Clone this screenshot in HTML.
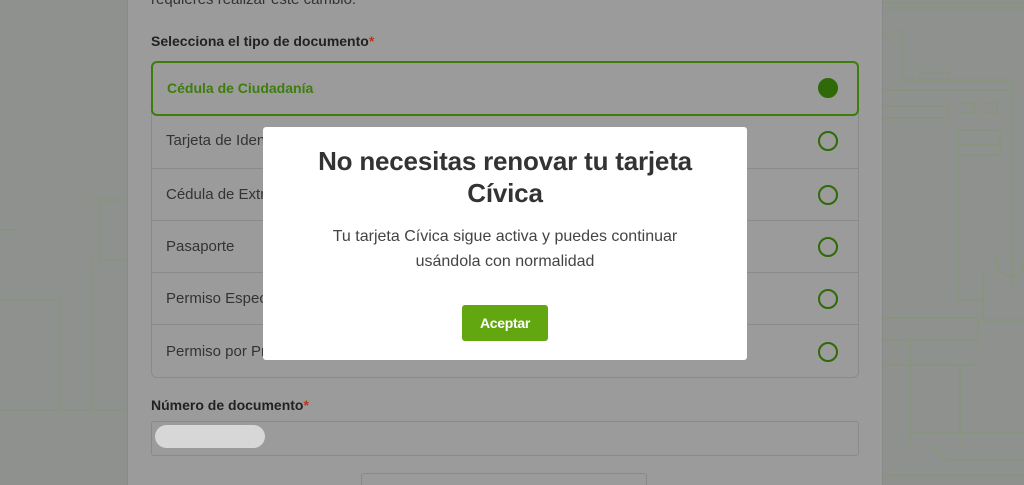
<!DOCTYPE html>
<html><head><meta charset="utf-8"><style>
*{margin:0;padding:0;box-sizing:border-box}
html{width:1024px;height:485px;overflow:hidden}
body{width:1024px;height:485px;overflow:hidden;background:#8f918e;font-family:"Liberation Sans",sans-serif;position:relative}
.card{position:absolute;left:127px;top:0;width:756px;height:485px;background:#9b9b9b;border-left:1px solid #8a8a8a;border-right:1px solid #8a8a8a}
.t{position:absolute;color:#2e2e2e}
.list{position:absolute;left:151px;top:61px;width:708px;height:317px;border:1px solid #8a8a8a;border-radius:6px;overflow:visible}
.row{position:absolute;left:0;width:706px;border-top:1px solid #8a8a8a;font-size:15px;color:#333;padding-left:14px}
.rad{position:absolute;right:20px;width:20px;height:20px;border:2px solid #2f6a08;border-radius:50%}
.modal{position:absolute;left:263px;top:127px;width:484px;height:233px;background:#fff;border-radius:3px;text-align:center}
.btn{position:absolute;left:199px;top:178px;width:86px;height:36px;background:#62a70f;border-radius:3px;color:#fff;font-weight:bold;font-size:14px;line-height:36px;letter-spacing:-0.3px}
</style></head><body>
<svg style="position:absolute;left:0;top:0" width="1024" height="485" fill="none" stroke="#86967a" stroke-width="1.5">
<path d="M883 3H1024M883 8H1024M883 40L902 30V80H1012V155M920 80V73H948V80M883 90H1012M883 106H948V118H883M960 103H974V113H960M984 103H997V113H984M958 130V155H1000V130ZM958 145H1000M958 155V300H983M1012 155V290M983 270V320H1024M1012 178V210M998 255A14 14 0 1 0 1024 260M1012 290V265M883 340H978V318H883M883 365H978M910 340V443M910 433H1024M960 365V443M930 445L945 460H1024M883 475H1024"/>
<path d="M0 230H20M0 300H20M90 200H127M100 200V260H127M92 260V410H127M0 410H127M0 300H60V410"/>
</svg>
<div class="card"></div>
<div class="t" style="left:151px;top:-9px;font-size:15px;color:#333">requieres realizar este cambio.</div>
<div class="t" style="left:151px;top:33px;font-size:14px;font-weight:bold;color:#222">Selecciona el tipo de documento<span style="color:#b5381c">*</span></div>
<div class="list">
<div class="row" style="top:-1px;left:-1px;width:708px;height:55px;border:2px solid #3d7d0b;border-radius:6px;color:#3d7d0b;font-weight:bold;font-size:14px;line-height:51px">Cédula de Ciudadanía<div class="rad" style="top:15px;background:#2f6a08;right:19px"></div></div>
<div class="row" style="top:53px;height:53px;line-height:52px;border-top:none">Tarjeta de Iden<div class="rad" style="top:16px"></div></div>
<div class="row" style="top:106px;height:52px;line-height:52px">Cédula de Extr<div class="rad" style="top:16px"></div></div>
<div class="row" style="top:158px;height:52px;line-height:52px">Pasaporte<div class="rad" style="top:16px"></div></div>
<div class="row" style="top:210px;height:52px;line-height:52px">Permiso Especi<div class="rad" style="top:16px"></div></div>
<div class="row" style="top:262px;height:53px;line-height:54px">Permiso por Pr<div class="rad" style="top:17px"></div></div>
</div>
<div class="t" style="left:151px;top:397px;font-size:14px;font-weight:bold;color:#222">Número de documento<span style="color:#b5381c">*</span></div>
<div style="position:absolute;left:151px;top:421px;width:708px;height:35px;border:1px solid #8a8a8a;border-radius:3px"></div>
<div style="position:absolute;left:155px;top:425px;width:110px;height:23px;background:#d7d7d7;border-radius:12px"></div>
<div style="position:absolute;left:361px;top:473px;width:286px;height:12px;border:1px solid #8a8a8a;border-bottom:none;border-radius:3px 3px 0 0"></div>
<div class="modal">
<div style="position:absolute;left:0;right:0;top:18px;font-size:26px;font-weight:bold;color:#333;line-height:32px;letter-spacing:-0.2px">No necesitas renovar tu tarjeta<br>Cívica</div>
<div style="position:absolute;left:0;right:0;top:97px;font-size:16px;color:#444;line-height:25px">Tu tarjeta Cívica sigue activa y puedes continuar<br>usándola con normalidad</div>
<div class="btn">Aceptar</div>
</div>
</body></html>
